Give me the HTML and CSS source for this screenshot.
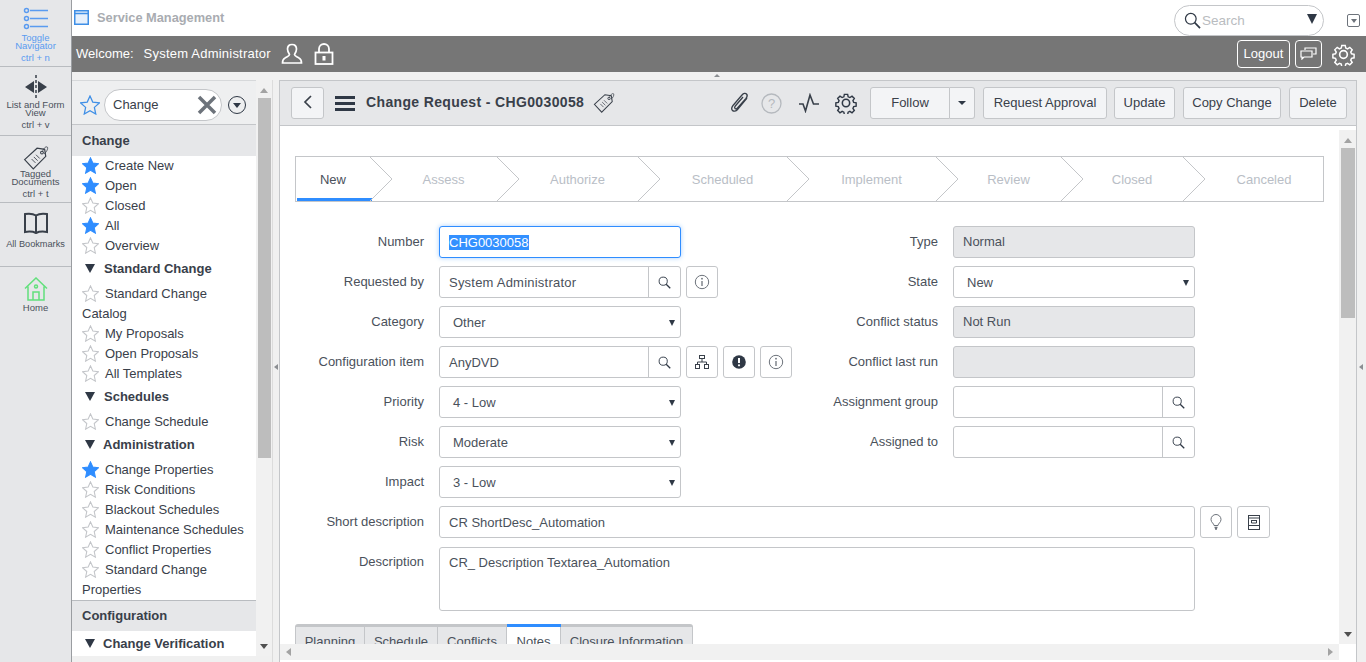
FILE: index.html
```html
<!DOCTYPE html>
<html lang="en">
<head>
  <meta charset="UTF-8">
  <title>Service Management</title>
  <link rel="stylesheet" href="styles.css">
</head>
<body>
<svg class="defs" width="0" height="0">
  <symbol id="star" viewBox="0 0 16 16"><path d="M8 .8l2.2 4.9 5.3.6-4 3.6 1.1 5.3L8 12.5l-4.6 2.7 1.1-5.3-4-3.6 5.3-.6z"/></symbol>
  <symbol id="mag" viewBox="0 0 14 14"><circle cx="5.6" cy="5.6" r="4.4" fill="none" stroke="currentColor" stroke-width="1"/><path d="M8.8 8.8l4.4 4.4" stroke="currentColor" stroke-width="1.4"/></symbol>
  <symbol id="info" viewBox="0 0 16 16"><circle cx="8" cy="8" r="6.7" fill="none" stroke="currentColor"/><path d="M8 7v5" stroke="currentColor" stroke-width="1.3"/><circle cx="8" cy="4.7" r=".9" fill="currentColor"/></symbol>
  <symbol id="tag" viewBox="0 0 24 24"><path d="M1.5 14.5L13 4l7 1 1 6.5L9.500 23z" fill="none" stroke="currentColor" stroke-width="1.100" transform="translate(0 -1)"/><circle cx="17.500" cy="7" r="1.300" fill="none" stroke="currentColor"/><path d="M18 6c1-3 3-5 4.500-4 1 1-1 5-3 6M8 13l3.500 3.500M10 11l3.500 3.500M12 9l3.500 3.500" fill="none" stroke="currentColor" stroke-width=".8"/></symbol>
  <symbol id="gear" viewBox="0 0 24 24"><path d="M10 1.500h4l.6 3 2.100.9 2.600-1.700 2.800 2.800-1.700 2.600.9 2.100 3 .6v4l-3 .6-.9 2.100 1.700 2.600-2.800 2.800-2.600-1.700-2.100.9-.6 3h-4l-.6-3-2.100-.9-2.600 1.700-2.800-2.800 1.700-2.600-.9-2.100-3-.6v-4l3-.6.9-2.100L1.900 6.500l2.800-2.800 2.600 1.700 2.100-.9z" fill="none" stroke="currentColor" stroke-width="1.700" transform="translate(1.200 1.200) scale(.9)"/><circle cx="12" cy="12" r="4" fill="none" stroke="currentColor" stroke-width="1.700"/></symbol>
  <symbol id="chev" viewBox="0 0 23 44" preserveAspectRatio="none"><path d="M0 0l22 22L0 44" fill="none" stroke="#c4c6c9"/></symbol>
</svg>

<div class="app">
  <nav class="rail">
    <a class="rail-item rail-toggle">
      <svg width="26" height="24" viewBox="0 0 26 24" fill="none" stroke="#5a9bf0" stroke-width="1.500"><circle cx="3.500" cy="3.500" r="2"/><circle cx="3.500" cy="11.500" r="2"/><circle cx="3.500" cy="19.500" r="2"/><path d="M7 3.500h18M7 11.500h18M7 19.500h18"/></svg>
      <span>Toggle Navigator</span><em>ctrl + n</em>
    </a>
    <a class="rail-item rail-view">
      <svg width="26" height="24" viewBox="0 0 26 24"><path d="M11 6v12L2 12zM15 6v12l9-6z" fill="#39404a"/><path d="M13 0v24" stroke="#39404a" stroke-width="1.500" stroke-dasharray="3 2"/></svg>
      <span>List and Form View</span><em>ctrl + v</em>
    </a>
    <a class="rail-item rail-tagged">
      <svg width="26" height="26" class="tag-big"><use href="#tag"/></svg>
      <span>Tagged Documents</span><em>ctrl + t</em>
    </a>
    <a class="rail-item rail-books">
      <svg width="26" height="23" viewBox="0 0 26 23" fill="none" stroke="#39404a" stroke-width="2"><path d="M13 3.500C10 1.500 5 1.500 2 2v18c3-.5 8-.5 11 1 3-1.500 8-1.500 11-1V2c-3-.5-8-.5-11 1.500zM13 3.500V21"/></svg>
      <span>All Bookmarks</span>
    </a>
    <a class="rail-item rail-home">
      <svg width="24" height="24" viewBox="0 0 24 24" fill="none" stroke="#62e07c" stroke-width="1.500"><path d="M1 11.500L12 1l11 10.500M4 9.500V23h16V9.500M9 23v-8h6v8"/><circle cx="12" cy="9.500" r="1.500"/></svg>
      <span>Home</span>
    </a>
  </nav>

  <div class="main">
    <header class="topbar">
      <svg width="15" height="15" viewBox="0 0 15 15"><rect x=".75" y=".75" width="13.500" height="13.500" fill="#e6f0fc" stroke="#3f8fe6" stroke-width="1.500"/><path d="M1 3.500h13" stroke="#3f8fe6" stroke-width="1.500"/></svg>
      <span class="app-title">Service Management</span>
      <div class="global-search">
        <svg width="17" height="17" viewBox="0 0 14 14" class="ink"><use href="#mag"/></svg>
        <span class="placeholder">Search</span>
        <i class="caret-big"></i>
      </div>
      <span class="mini-box"><i></i></span>
    </header>

    <div class="welcome">
      <span class="welcome-label">Welcome:</span>
      <span class="welcome-user spaced">System Administrator</span>
      <svg width="22" height="22" viewBox="0 0 22 22" fill="none" stroke="#fff" stroke-width="1.700"><path d="M11 1.500c-3 0-4.500 2-4.500 4.500 0 2.500 1 4 2 5.500 0 1.500-2 2-4.500 3.500-2 1-2.500 2.500-2.500 5h19c0-2.500-.5-4-2.500-5-2.500-1.500-4.500-2-4.500-3.500 1-1.500 2-3 2-5.500 0-2.500-1.500-4.500-4.500-4.500z"/></svg>
      <svg width="20" height="22" viewBox="0 0 20 22" fill="none" stroke="#fff" stroke-width="1.800"><rect x="1.500" y="9.500" width="17" height="11.500"/><path d="M5 9.500V6a5 5 0 0 1 10 0v3.500"/><rect x="8.500" y="13" width="3" height="4.500" fill="#fff" stroke="none"/></svg>
      <button class="ghost logout">Logout</button>
      <button class="ghost chat">
        <svg width="17" height="13" viewBox="0 0 17 13" fill="none" stroke="#fff" stroke-width="1.200"><path d="M5 3V1h11v6h-3M1 4h11v6H4l-2 2v-2H1z"/></svg>
      </button>
      <svg class="welcome-gear" width="23" height="23"><use href="#gear"/></svg>
    </div>

    <div class="splitter-h"><i></i></div>

    <div class="work">
      <aside class="nav-panel">
        <div class="nav-scroll-area">
          <div class="nav-search">
            <svg width="20" height="20" class="star-outline"><use href="#star"/></svg>
            <div class="nav-filter">
              <span>Change</span>
              <svg width="22" height="22" viewBox="0 0 22 22"><path d="M3 3l16 16M19 3L3 19" stroke="#6d737b" stroke-width="3.500"/></svg>
            </div>
            <span class="circle-caret"><i></i></span>
          </div>

          <h3 class="nav-group">Change</h3>
          <ul class="nav-list">
            <li><svg class="on"><use href="#star"/></svg>Create New</li>
            <li><svg class="on"><use href="#star"/></svg>Open</li>
            <li><svg><use href="#star"/></svg>Closed</li>
            <li><svg class="on"><use href="#star"/></svg>All</li>
            <li><svg><use href="#star"/></svg>Overview</li>
          </ul>
          <h4 class="nav-sub sub-indent"><i></i>Standard Change</h4>
          <ul class="nav-list">
            <li><svg><use href="#star"/></svg>Standard Change Catalog</li>
            <li><svg><use href="#star"/></svg>My Proposals</li>
            <li><svg><use href="#star"/></svg>Open Proposals</li>
            <li><svg><use href="#star"/></svg>All Templates</li>
          </ul>
          <h4 class="nav-sub sub-indent"><i></i>Schedules</h4>
          <ul class="nav-list">
            <li><svg><use href="#star"/></svg>Change Schedule</li>
          </ul>
          <h4 class="nav-sub"><i></i>Administration</h4>
          <ul class="nav-list">
            <li><svg class="on"><use href="#star"/></svg>Change Properties</li>
            <li><svg><use href="#star"/></svg>Risk Conditions</li>
            <li><svg><use href="#star"/></svg>Blackout Schedules</li>
            <li><svg><use href="#star"/></svg>Maintenance Schedules</li>
            <li><svg><use href="#star"/></svg>Conflict Properties</li>
            <li><svg><use href="#star"/></svg>Standard Change Properties</li>
          </ul>
          <h3 class="nav-group nav-group-line">Configuration</h3>
          <h4 class="nav-sub"><i></i>Change Verification</h4>
        </div>
        <div class="scrollbar nav-scrollbar">
          <i class="arrow-up"></i><b class="thumb"></b><i class="arrow-down"></i>
        </div>
      </aside>

      <div class="splitter-v"><i></i></div>

      <section class="record">
        <div class="record-head">
          <button class="btn back">
            <svg width="10" height="14" viewBox="0 0 10 14" fill="none" stroke="#39404a" stroke-width="1.700"><path d="M8 1L2 7l6 6"/></svg>
          </button>
          <span class="burger"><i></i><i></i><i></i></span>
          <h1 class="record-title">Change Request - CHG0030058</h1>
          <svg class="title-tag" width="22" height="22"><use href="#tag"/></svg>
          <div class="head-icons">
            <svg width="22" height="22" viewBox="0 0 22 22" fill="none" stroke="#39404a" stroke-width="1.300"><path d="M18 6L8.500 17.500c-1.500 2-4 2-5 1s-1-3 .5-5L13 3c1.500-1.800 3.500-2 4.500-1s1 2.500-.5 4.500L8.500 16c-.8 1-2 1-2.500.5s-.5-1.500.3-2.500L14 5"/></svg>
            <svg class="help" width="21" height="21" viewBox="0 0 21 21" fill="none" stroke="#b5b9be" stroke-width="1.300"><circle cx="10.500" cy="10.500" r="9.500"/><text x="10.500" y="15" text-anchor="middle" class="help-q">?</text></svg>
            <svg class="pulse" width="22" height="20" viewBox="0 0 22 20" fill="none" stroke="#39404a" stroke-width="1.600"><path d="M1 11h4l2.500 7L12 2l3.500 9H21"/></svg>
            <svg class="ink head-gear" width="22" height="22"><use href="#gear"/></svg>
          </div>
          <div class="split-btn">
            <button class="btn follow">Follow</button>
            <button class="btn follow-caret"><i></i></button>
          </div>
          <button class="btn w-approval">Request Approval</button>
          <button class="btn w-update">Update</button>
          <button class="btn w-copy">Copy Change</button>
          <button class="btn w-delete">Delete</button>
        </div>

        <div class="record-body">
          <div class="record-content">
            <div class="record-scroll">
              <ol class="stepper">
                <li class="step step-new active"><span>New</span><svg><use href="#chev"/></svg></li>
                <li class="step step-assess"><span>Assess</span><svg><use href="#chev"/></svg></li>
                <li class="step step-authorize"><span>Authorize</span><svg><use href="#chev"/></svg></li>
                <li class="step step-scheduled"><span>Scheduled</span><svg><use href="#chev"/></svg></li>
                <li class="step step-implement"><span>Implement</span><svg><use href="#chev"/></svg></li>
                <li class="step step-review"><span>Review</span><svg><use href="#chev"/></svg></li>
                <li class="step step-closed"><span>Closed</span><svg><use href="#chev"/></svg></li>
                <li class="step step-canceled"><span>Canceled</span></li>
              </ol>

              <div class="form-cols">
                <div class="form-col col-left">
                  <div class="row"><label>Number</label><div class="field field-focus"><span class="selected">CHG0030058</span></div></div>
                  <div class="row"><label>Requested by</label><div class="field lookup"><span class="spaced">System Administrator</span><b class="mag-cell"><svg width="13" height="13" class="ink"><use href="#mag"/></svg></b></div><button class="icon-btn"><svg width="16" height="16"><use href="#info"/></svg></button></div>
                  <div class="row"><label>Category</label><div class="field select">Other<i></i></div></div>
                  <div class="row"><label>Configuration item</label><div class="field lookup"><span>AnyDVD</span><b class="mag-cell"><svg width="13" height="13" class="ink"><use href="#mag"/></svg></b></div>
                    <button class="icon-btn"><svg width="14" height="14" viewBox="0 0 14 14" fill="none" stroke="#39404a"><rect x="4.500" y=".5" width="5" height="3"/><rect x=".5" y="9.500" width="4" height="4"/><rect x="9.500" y="9.500" width="4" height="4"/><path d="M7 3.500V7M2.500 9.500V7h9v2.500"/></svg></button>
                    <button class="icon-btn"><svg width="14" height="14" viewBox="0 0 14 14"><circle cx="7" cy="7" r="6.800" fill="#2f3845"/><path d="M7 3v5" stroke="#fff" stroke-width="2"/><circle cx="7" cy="10.300" r="1.100" fill="#fff"/></svg></button>
                    <button class="icon-btn"><svg width="16" height="16"><use href="#info"/></svg></button></div>
                  <div class="row"><label>Priority</label><div class="field select">4 - Low<i></i></div></div>
                  <div class="row"><label>Risk</label><div class="field select">Moderate<i></i></div></div>
                  <div class="row"><label>Impact</label><div class="field select">3 - Low<i></i></div></div>
                </div>
                <div class="form-col col-right">
                  <div class="row"><label>Type</label><div class="field readonly">Normal</div></div>
                  <div class="row"><label>State</label><div class="field select">New<i></i></div></div>
                  <div class="row"><label>Conflict status</label><div class="field readonly">Not Run</div></div>
                  <div class="row"><label>Conflict last run</label><div class="field readonly"></div></div>
                  <div class="row"><label>Assignment group</label><div class="field lookup"><span></span><b class="mag-cell"><svg width="13" height="13" class="ink"><use href="#mag"/></svg></b></div></div>
                  <div class="row"><label>Assigned to</label><div class="field lookup"><span></span><b class="mag-cell"><svg width="13" height="13" class="ink"><use href="#mag"/></svg></b></div></div>
                </div>
              </div>

              <div class="row row-wide"><label>Short description</label><div class="field field-wide">CR ShortDesc_Automation</div>
                <button class="icon-btn"><svg width="12" height="16" viewBox="0 0 12 16" fill="none" stroke="#6d737b"><path d="M4 11.500C4 9.500 1 8.500 1 5.500a5 5 0 0 1 10 0c0 3-3 4-3 6z"/><path d="M4.500 13.500h3M5 15h2" stroke-width="1.300"/></svg></button>
                <button class="icon-btn icon-btn-wide"><svg width="12" height="15" viewBox="0 0 12 15" fill="none" stroke="#39404a"><rect x=".5" y=".5" width="11" height="14"/><path d="M.5 3h11M.5 10.500h11M3 5.500h6M3.500 5.500v2.500h5V5.500"/></svg></button></div>
              <div class="row row-wide row-desc"><label>Description</label><div class="field field-wide field-area">CR_ Description Textarea_Automation</div></div>

              <div class="tabs">
                <span class="tab tab-planning">Planning</span>
                <span class="tab tab-schedule">Schedule</span>
                <span class="tab tab-conflicts">Conflicts</span>
                <span class="tab tab-notes active">Notes</span>
                <span class="tab tab-closure">Closure Information</span>
              </div>
            </div>
            <div class="scrollbar body-scrollbar">
              <i class="arrow-up"></i><b class="thumb"></b><i class="arrow-down"></i>
            </div>
          </div>
          <div class="hscroll">
            <div class="hscroll-track"><i class="arrow-left"></i><i class="arrow-right"></i></div>
            <div class="hscroll-corner"></div>
          </div>
        </div>
      </section>

      <div class="splitter-right"><i></i></div>
    </div>
  </div>
</div>
</body>
</html>
```

FILE: styles.css
```css
* {
  box-sizing: border-box;
}
html, body {
  margin: 0;
  height: 100%;
  overflow: hidden;
}
body {
  font-family: "Liberation Sans", Arial, sans-serif;
  font-size: 13px;
  color: #39404a;
  background: #fff;
}
ul, ol {
  list-style: none;
  margin: 0;
  padding: 0;
}
button {
  font: inherit;
  color: inherit;
}
.defs {
  position: absolute;
}
.ink {
  color: #2f3845;
}
.spaced {
  letter-spacing: .22px;
}
.app {
  display: flex;
  height: 662px;
  overflow: hidden;
}

/* left rail */
.rail {
  width: 72px;
  flex: none;
  background: #e6e7e9;
  border-right: 1px solid #9a9da1;
  display: flex;
  flex-direction: column;
}
.rail-item {
  display: flex;
  flex-direction: column;
  align-items: center;
  text-align: center;
  font-size: 9.5px;
  line-height: 8px;
  border-bottom: 1px solid #b9bcc0;
  color: #4a515b;
}
.rail-item span {
  display: block;
  padding: 0 2px;
}
.rail-item em {
  font-style: normal;
  line-height: 10px;
  margin-top: 3px;
}
.rail-toggle {
  height: 67px;
  padding-top: 7px;
  color: #5a9bf0;
}
.rail-toggle span {
  width: 50px;
  margin-top: 3px;
}
.rail-view {
  height: 69px;
  padding-top: 8px;
}
.rail-view span {
  margin-top: 2px;
}
.rail-tagged {
  height: 67px;
  padding-top: 9px;
}
.rail-tagged span {
  width: 56px;
  margin-top: -1px;
}
.tag-big {
  color: #39404a;
}
.rail-books {
  height: 64px;
  padding-top: 9px;
}
.rail-books span {
  margin-top: 4px;
  white-space: nowrap;
  line-height: 10px;
  font-size: 9.2px;
}
.rail-home {
  border-bottom: 0;
  padding-top: 10px;
}
.rail-home span {
  margin-top: 3px;
}

/* header bars */
.main {
  flex: 1;
  min-width: 0;
  display: flex;
  flex-direction: column;
}
.topbar {
  height: 36px;
  flex: none;
  display: flex;
  align-items: center;
  padding: 0 6px 2px 2px;
}
.app-title {
  margin-left: 8px;
  font-size: 12.800px;
  font-weight: bold;
  color: #a9acb1;
}
.global-search {
  margin-left: auto;
  width: 150px;
  height: 31px;
  border: 1px solid #c4c6c9;
  border-radius: 16px;
  display: flex;
  align-items: center;
  padding: 0 6px 0 9px;
  margin-top: 7px;
}
.placeholder {
  margin-left: 1px;
  color: #b9bcc0;
  font-size: 13.500px;
}
.caret-big {
  margin-left: auto;
  margin-top: -3px;
  border-left: 5px solid transparent;
  border-right: 5px solid transparent;
  border-top: 10px solid #2f3845;
}
.mini-box {
  width: 13px;
  height: 13px;
  margin-left: 23px;
  margin-top: 7px;
  border: 1px solid #6d737b;
  border-radius: 2px;
  display: flex;
  align-items: center;
  justify-content: center;
}
.mini-box i {
  border-left: 3px solid transparent;
  border-right: 3px solid transparent;
  border-top: 4px solid #6d737b;
}
.welcome {
  height: 36px;
  flex: none;
  background: #767676;
  color: #fff;
  display: flex;
  align-items: center;
  padding: 0 11px 0 4px;
}
.welcome-label {
  margin-right: 10px;
  margin-top: -2px;
}
.welcome-user {
  margin-right: 10px;
  margin-top: -2px;
}
.welcome svg + svg {
  margin-left: 11px;
}
.ghost {
  background: transparent;
  border: 1px solid #fff;
  border-radius: 4px;
  color: #fff;
  height: 28px;
  padding: 0 0 2px;
  display: flex;
  align-items: center;
  justify-content: center;
}
.logout {
  margin-left: auto;
  width: 53px;
}
.chat {
  margin-left: 5px;
  width: 27px;
}
.welcome .welcome-gear {
  margin-left: 10px;
}
.splitter-h {
  height: 8px;
  flex: none;
  background: #f0f0f0;
  display: flex;
  justify-content: center;
  padding-top: 2px;
}
.splitter-h i {
  border-left: 3px solid transparent;
  border-right: 3px solid transparent;
  border-bottom: 3px solid #8b8e92;
  height: 0;
  margin-right: 4px;
}
.work {
  flex: 1;
  min-height: 0;
  display: flex;
  background: #f0f0f0;
}

/* nav panel */
.nav-panel {
  width: 200px;
  flex: none;
  display: flex;
  height: 582px;
}
.nav-scroll-area {
  width: 184px;
  flex: none;
  background: #fff;
  overflow: hidden;
  height: 576px;
}
.nav-search {
  height: 45px;
  background: #eeeff0;
  border-bottom: 1px solid #c4c6c9;
  border-top: 1px solid #d6d8da;
  display: flex;
  align-items: center;
  padding: 4px 0 0 8px;
}
.star-outline {
  fill: none;
  stroke: #3f8fe6;
  flex: none;
}
.nav-filter {
  width: 118px;
  height: 32px;
  margin-left: 4px;
  border: 1px solid #c4c6c9;
  border-radius: 16px;
  background: #fff;
  display: flex;
  align-items: center;
  justify-content: space-between;
  padding: 0 3px 0 8px;
  font-size: 13px;
}
.circle-caret {
  width: 18px;
  height: 18px;
  margin-left: 6px;
  border: 1.500px solid #2f3845;
  border-radius: 50%;
  display: flex;
  align-items: center;
  justify-content: center;
}
.circle-caret i {
  border-left: 4px solid transparent;
  border-right: 4px solid transparent;
  border-top: 5px solid #2f3845;
  margin-top: 1px;
}
.nav-group {
  margin: 0;
  height: 31px;
  line-height: 32px;
  padding-left: 10px;
  background: #e6e7e9;
  font-size: 13px;
  font-weight: bold;
}
.nav-group-line {
  border-top: 1px solid #b9bcc0;
  line-height: 30px;
}
.nav-list {
  padding-left: 10px;
  padding-right: 3px;
}
.nav-list li {
  line-height: 20px;
  font-size: 13px;
}
.nav-list svg {
  width: 17px;
  height: 17px;
  margin: 0 6px 0 0;
  vertical-align: -4px;
  fill: #fff;
  stroke: #c3c5c9;
}
.nav-list svg.on {
  fill: #2f8dff;
  stroke: #2f8dff;
}
.nav-sub {
  margin: 0;
  height: 28px;
  display: flex;
  align-items: center;
  padding: 0 0 4px 13px;
  font-size: 13px;
  font-weight: bold;
}
.nav-sub i {
  border-left: 5px solid transparent;
  border-right: 5px solid transparent;
  border-top: 9px solid #2f3845;
  margin-right: 8px;
}
.sub-indent i {
  margin-right: 9px;
}

/* scrollbars */
.scrollbar {
  width: 16px;
  flex: none;
  background: #f1f1f1;
  display: flex;
  flex-direction: column;
  align-items: center;
}
.thumb {
  display: block;
  width: 13px;
  background: #bdbdbd;
}
.arrow-up {
  margin: 8px 0 5px;
  border-left: 4px solid transparent;
  border-right: 4px solid transparent;
  border-bottom: 5px solid #a3a3a3;
}
.arrow-down {
  margin-top: auto;
  margin-bottom: 7px;
  border-left: 4px solid transparent;
  border-right: 4px solid transparent;
  border-top: 5px solid #505050;
}
.nav-scrollbar {
  height: 576px;
}
.nav-scrollbar .thumb {
  height: 360px;
}
.body-scrollbar .thumb {
  height: 170px;
}
.splitter-v {
  width: 7px;
  flex: none;
  background: #f0f0f0;
  border-left: 1px solid #dcdcdc;
  display: flex;
  align-items: center;
  padding: 0 0 9px 1px;
}
.splitter-v i {
  border-top: 3px solid transparent;
  border-bottom: 3px solid transparent;
  border-right: 4px solid #8b8e92;
}
.splitter-right {
  flex: 1;
  background: #f0f0f0;
  display: flex;
  align-items: center;
  padding: 0 0 9px 2px;
  border-left: 1px solid #c4c6c9;
}
.splitter-right i {
  border-top: 3px solid transparent;
  border-bottom: 3px solid transparent;
  border-right: 4px solid #8b8e92;
}

/* record */
.record {
  width: 1077px;
  flex: none;
  display: flex;
  flex-direction: column;
  border-left: 1px solid #c4c6c9;
}
.record-head {
  height: 46px;
  flex: none;
  background: #e6e7e9;
  border-top: 1px solid #c4c6c9;
  border-bottom: 1px solid #c4c6c9;
  display: flex;
  align-items: center;
  padding: 0 9px 0 11px;
}
.btn {
  height: 32px;
  background: #f3f4f6;
  border: 1px solid #c4c6c9;
  border-radius: 3px;
  padding: 0 0 2px;
  color: #39404a;
  font-size: 13px;
  display: flex;
  align-items: center;
  justify-content: center;
  flex: none;
}
.back {
  width: 33px;
}
.burger {
  width: 20px;
  margin-left: 11px;
  display: flex;
  flex-direction: column;
  gap: 3px;
}
.burger i {
  height: 3px;
  background: #2f3845;
}
.record-title {
  margin: -2px 0 0 11px;
  font-size: 14px;
  font-weight: bold;
  letter-spacing: .36px;
  color: #39404a;
  white-space: nowrap;
}
.title-tag {
  margin-left: 9px;
  color: #39404a;
  flex: none;
}
.head-icons {
  margin-left: auto;
  display: flex;
  align-items: center;
  flex: none;
  margin-right: 13px;
}
.help {
  margin-left: 10px;
}
.pulse {
  margin-left: 16px;
}
.head-gear {
  margin-left: 15px;
}
.help-q {
  font-size: 13px;
  fill: #b5b9be;
  stroke: none;
}
.split-btn {
  display: flex;
  flex: none;
}
.follow {
  width: 80px;
  border-radius: 3px 0 0 3px;
}
.follow-caret {
  width: 25px;
  border-left: 0;
  border-radius: 0 3px 3px 0;
}
.follow-caret i {
  border-left: 4px solid transparent;
  border-right: 4px solid transparent;
  border-top: 4px solid #2f3845;
  margin-top: 2px;
}
.w-approval {
  width: 124px;
  margin-left: 8px;
}
.w-update {
  width: 61px;
  margin-left: 7px;
}
.w-copy {
  width: 98px;
  margin-left: 8px;
}
.w-delete {
  width: 58px;
  margin-left: 8px;
}
.record-body {
  flex: 1;
  min-height: 0;
  display: flex;
  flex-direction: column;
  background: #fff;
}
.record-content {
  height: 518px;
  flex: none;
  display: flex;
  overflow: hidden;
  padding-top: 4px;
}
.record-scroll {
  flex: 1;
  min-width: 0;
  padding: 26px 15px 0 15px;
  height: 514px;
  overflow: hidden;
}
.body-scrollbar {
  width: 17px;
  height: 514px;
}
.body-scrollbar .thumb {
  width: 14px;
}

/* stepper */
.stepper {
  display: flex;
  height: 46px;
  border: 1px solid #c4c6c9;
}
.step {
  position: relative;
  display: flex;
  align-items: center;
  justify-content: center;
  padding-left: 20px;
  color: #b9bec6;
  flex: none;
}
.step svg {
  position: absolute;
  top: 0;
  right: -23px;
  width: 23px;
  height: 44px;
  z-index: 1;
}
.step.active {
  padding-left: 0;
  color: #4a515b;
}
.step.active::before {
  content: "";
  position: absolute;
  left: 1px;
  right: -2px;
  bottom: 0;
  height: 3px;
  background: #2f8dff;
}
.step-new { width: 74px; }
.step-assess { width: 127px; }
.step-authorize { width: 141px; }
.step-scheduled { width: 149px; }
.step-implement { width: 149px; }
.step-review { width: 125px; }
.step-closed { width: 122px; }
.step-canceled { flex: 1; padding-left: 22px; }

/* form */
.form-cols {
  display: flex;
  margin-top: 24px;
}
.col-left {
  width: 515px;
}
.col-right {
  width: 400px;
}
.row {
  display: flex;
  align-items: center;
  height: 32px;
  margin-bottom: 8px;
}
.row label {
  width: 129px;
  flex: none;
  text-align: right;
  margin-right: 15px;
  margin-top: -2px;
  color: #4a515b;
}
.col-right .row label {
  width: 128px;
}
.field {
  width: 242px;
  height: 32px;
  flex: none;
  border: 1px solid #c4c6c9;
  border-radius: 3px;
  background: #fff;
  display: flex;
  align-items: center;
  padding-left: 9px;
  color: #4a515b;
}
.field-focus {
  border-color: #2f8dff;
  box-shadow: 0 0 5px #a8d0ff;
}
.selected {
  background: #3390ff;
  color: #fff;
}
.readonly {
  background: #e6e7e9;
  padding-bottom: 2px;
}
.select {
  position: relative;
  padding-left: 13px;
}
.select i {
  position: absolute;
  right: 5px;
  top: 13px;
  border-left: 3px solid transparent;
  border-right: 3px solid transparent;
  border-top: 6px solid #2f3845;
}
.lookup {
  padding-right: 0;
  justify-content: space-between;
}
.mag-cell {
  width: 32px;
  height: 30px;
  border-left: 1px solid #c4c6c9;
  display: flex;
  align-items: center;
  justify-content: center;
}
.icon-btn {
  width: 32px;
  height: 32px;
  flex: none;
  margin-left: 5px;
  background: #fff;
  border: 1px solid #c4c6c9;
  border-radius: 3px;
  padding: 0;
  color: #6d737b;
  display: flex;
  align-items: center;
  justify-content: center;
}
.icon-btn-wide {
  width: 33px;
}
.row-wide .field-wide {
  width: 756px;
}
.row-desc {
  height: 64px;
  align-items: flex-start;
  margin: 9px 0 0;
}
.row-desc label {
  margin-top: 7px;
}
.field-area {
  height: 64px;
  align-items: flex-start;
  padding-top: 7px;
}
.tabs {
  display: flex;
  margin-top: 13px;
  height: 30px;
  border-top: 3px solid #c4c6c9;
  border-radius: 3px 3px 0 0;
  width: 398px;
  background: #e6e7e9;
}
.tab {
  padding-top: 7px;
  text-align: center;
  border-right: 1px solid #c4c6c9;
  color: #4a515b;
  white-space: nowrap;
}
.tab-planning {
  width: 70px;
  border-left: 1px solid #c4c6c9;
}
.tab-schedule { width: 73px; }
.tab-conflicts { width: 69px; }
.tab-notes { width: 54px; }
.tab-closure { width: 132px; }
.tab.active {
  background: #fff;
  box-shadow: 0 -3px 0 #2f8dff;
}
.hscroll {
  height: 16px;
  flex: none;
  display: flex;
}
.hscroll-track {
  flex: 1;
  background: #f1f1f1;
  display: flex;
  align-items: center;
  justify-content: space-between;
  padding: 0 6px;
}
.hscroll-corner {
  width: 17px;
}
.arrow-left {
  border-top: 4px solid transparent;
  border-bottom: 4px solid transparent;
  border-right: 5px solid #a3a3a3;
}
.arrow-right {
  border-top: 4px solid transparent;
  border-bottom: 4px solid transparent;
  border-left: 5px solid #a3a3a3;
}
```
